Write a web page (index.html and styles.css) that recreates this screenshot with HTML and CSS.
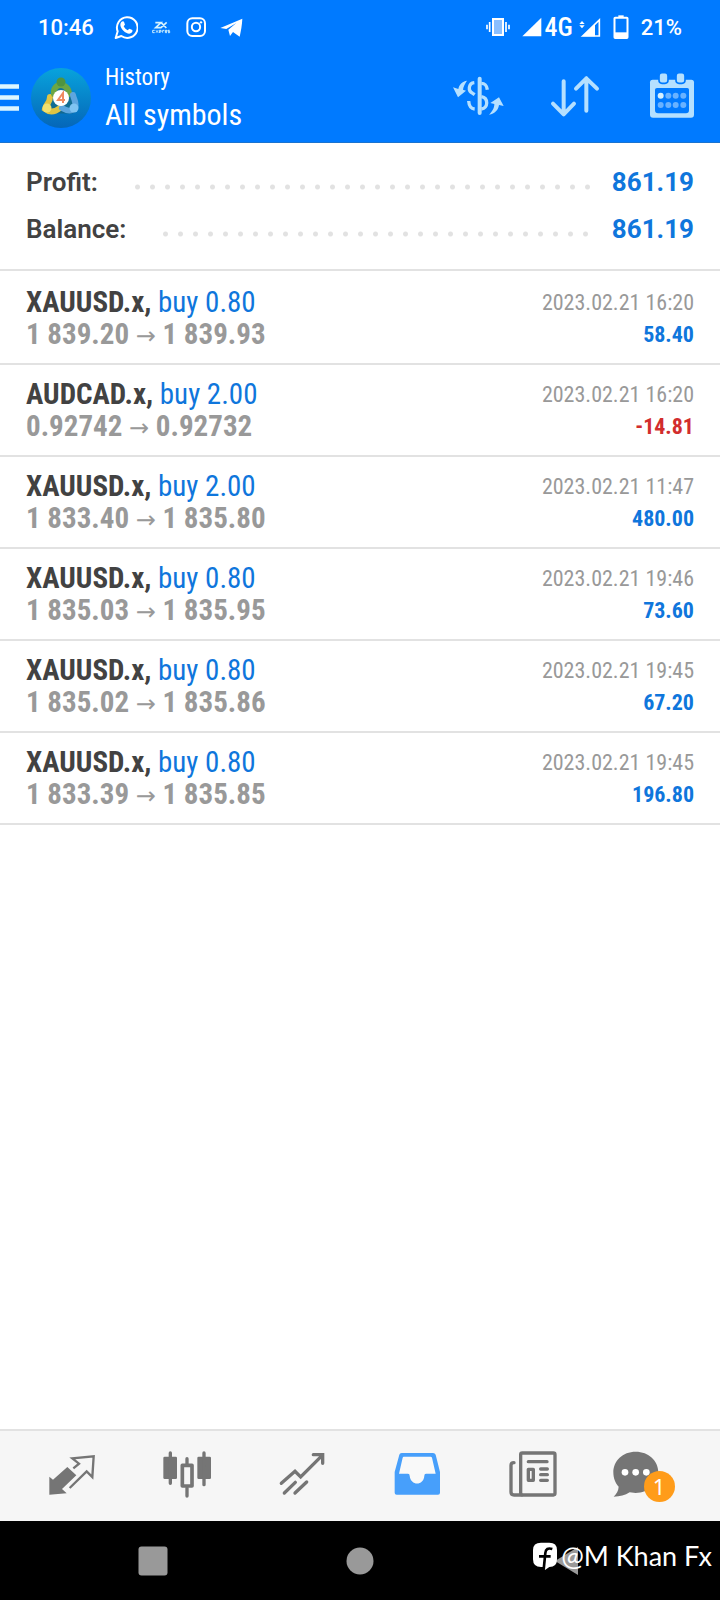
FILE: index.html
```html
<!DOCTYPE html>
<html lang="en">
<head>
<meta charset="utf-8">
<meta name="viewport" content="width=device-width, initial-scale=1">
<title>History</title>
<link rel="stylesheet" href="styles.css">
</head>
<body>
<header class="top">
  <div class="status">
    <time class="clock">10:46</time>
    <div class="notices">
      <svg viewBox="340 42 72 72"><path d="M345 111l6-20a31 31 0 1 1 11 14z" fill="none" stroke="#fff" stroke-width="6" stroke-linejoin="round"/><path d="M362 63c4-4 8-2 9 2l2 6-4 5c3 6 7 9 12 12l5-5 9 4c2 6-4 11-9 11-12 0-26-14-27-26 0-4 1-7 3-9z" fill="#fff"/></svg>
      <svg viewBox="446 42 72 72"><path d="M465 65h17l-16 15h16l17-16M482 64l16 17" fill="none" stroke="#d5f2ff" stroke-width="5"/><path d="M463 88h-6v7h6m4-7l6 7m0-7l-6 7m10 1v-8h5v5h-5m10 2v-7h5m3 3h5v-3h-5v7h5m8-7h-5v3h5v4h-5" fill="none" stroke="#cdf0ff" stroke-width="3"/></svg>
      <svg viewBox="550 44 72 72"><rect x="560" y="54" width="53" height="53" rx="15" fill="none" stroke="#fff" stroke-width="6"/><circle cx="586" cy="80" r="12.500" fill="none" stroke="#fff" stroke-width="6"/><circle cx="601" cy="66" r="3.500" fill="#fff"/></svg>
      <svg viewBox="654 44 72 72"><path d="M658 83l66-28c-1 20-4 36-8 54l-20-14-9 12-5-19 24-20-30 18z" fill="#fff"/></svg>
    </div>
    <div class="signals">
      <svg width="24" height="24" viewBox="138 43 72 72"><rect x="156" y="52" width="36" height="54" fill="#fff"/><rect x="162" y="58" width="24" height="42" fill="#8abfff"/><path d="M149 64v30M141 72v14M198 64v30M207 72v14" stroke="#fff" stroke-width="5"/></svg>
      <span class="network"><svg width="20" height="20" viewBox="248 50 60 60"><path d="M249 108l57-56v56z" fill="#fff"/></svg>4G</span>
      <span class="levels">
        <svg width="22" height="24" viewBox="420 43 66 72"><path d="M421 70l8-9 8 9zM421 74l8 9 8-9z" fill="#fff"/><path d="M431 106l50-48v48z" fill="none" stroke="#fff" stroke-width="5"/><path d="M430 107l38-37v37z" fill="#fff"/></svg>
        <svg width="16" height="26" viewBox="521 39 48 78"><path d="M537 49v-6h16v6" fill="#fff"/><rect x="525.500" y="50" width="39" height="61" rx="2" fill="none" stroke="#fff" stroke-width="6"/><path d="M525 94h40v16h-40z" fill="#fff"/></svg>
        <span>21%</span>
      </span>
    </div>
  </div>
  <div class="toolbar">
    <button class="menu" aria-label="Menu">
      <svg width="19" height="30" viewBox="0 0 19 30"><path d="M0 3.500h19M0 14.500h19M0 25.500h19" stroke="#ddf6ff" stroke-width="4.600"/></svg>
    </button>
    <svg class="logo" width="60" height="60" viewBox="0 0 60 60">
      <defs>
        <linearGradient id="sky" x1="0" y1="0" x2="0" y2="1"><stop offset="0" stop-color="#08a3dc"/><stop offset="1" stop-color="#0566b8"/></linearGradient>
      </defs>
      <circle cx="30" cy="30" r="30" fill="url(#sky)"/>
      <g stroke-linecap="round" fill="none">
        <path d="M20 39l10-18 10 18z" stroke="#1d5c60" stroke-width="13" stroke-linejoin="round" opacity=".5"/>
        <path d="M19 29c0 6-4 7-5 12 5 4 10 3 15-1" stroke="#e0c443" stroke-width="6"/>
        <path d="M23 26c-1-6 3-9 7-9s8 4 8 9" stroke="#6ba644" stroke-width="6"/>
        <path d="M42 27c1 5 4 8 2 13-4 4-8 3-13 0" stroke="#5ea6df" stroke-width="6"/>
      </g>
      <circle cx="30" cy="14" r="4.500" fill="#4f9440"/><circle cx="16" cy="40" r="4.500" fill="#f1e06f"/><circle cx="43" cy="40" r="4.500" fill="#7fc4f2"/>
      <circle cx="30" cy="30" r="8" fill="#fff"/>
      <path d="M32 35V25l-5 7h7" fill="none" stroke="#ef8a62" stroke-width="2"/>
    </svg>
    <div class="titles">
      <span class="sub">History</span>
      <h1 class="title">All symbols</h1>
    </div>
    <div class="actions">
      <button aria-label="Currency"><svg viewBox="21 208 180 180"><g fill="none" stroke="#b5e0ff" stroke-width="10"><path d="M116 240v103" stroke-width="12" stroke-linecap="round"/><path d="M100 252c-18 2-20 25-5 32l6 4M101 331c-12-1-17-10-18-24M121 254c12 0 16 6 18 19M121 294c22 4 21 34 0 37"/></g><path d="M78 246c-14 2-24 12-26 25l-16-5 15 30 24-20-9-3c1-9 6-18 12-27zM144 348c18-3 28-14 30-29l14 3-14-26-26 17 12 3c0 14-8 24-16 32z" fill="#b5e0ff"/></svg></button>
      <button aria-label="Sort"><svg viewBox="312 208 180 180"><path d="M368 248v98M336 315l32 32 31-32M436 336v-97M405 270l31-31 32 31" fill="none" stroke="#b5e0ff" stroke-width="12" stroke-linecap="round" stroke-linejoin="round"/></svg></button>
      <button aria-label="Choose period"><svg viewBox="603 208 180 180"><path d="M635 243h116q8 0 8 8v97q0 9-9 9H636q-9 0-9-9v-97q0-8 8-8z" fill="#b5e0ff"/><path d="M648 268h91q5 0 5 5v61q0 10-9 10h-84q-9 0-9-10v-61q0-5 6-5z" fill="#007aff"/><rect x="654" y="222" width="27" height="32" rx="9" fill="#b5e0ff" stroke="#007aff" stroke-width="5"/><rect x="705" y="222" width="27" height="32" rx="9" fill="#b5e0ff" stroke="#007aff" stroke-width="5"/><circle cx="659" cy="291" r="9" fill="#d5f0ff"/><g fill="#69b2ff"><circle cx="682" cy="291" r="9"/><circle cx="704" cy="291" r="9"/><circle cx="727" cy="291" r="9"/><circle cx="659" cy="319" r="9"/><circle cx="682" cy="319" r="9"/><circle cx="704" cy="319" r="9"/><circle cx="727" cy="319" r="9"/></g></svg></button>
    </div>
  </div>
</header>

<main class="content">
  <dl class="summary">
    <div class="total"><dt>Profit:</dt><dd>861.19</dd></div>
    <div class="total"><dt>Balance:</dt><dd>861.19</dd></div>
  </dl>
  <ul class="deals">
    <li class="deal"><div><p class="name"><b>XAUUSD.x,</b> <span class="side">buy 0.80</span></p><p class="price">1 839.20 <span class="arrow">→</span> 1 839.93</p></div><div class="right"><time class="date">2023.02.21 16:20</time><p class="result">58.40</p></div></li>
    <li class="deal"><div><p class="name"><b>AUDCAD.x,</b> <span class="side">buy 2.00</span></p><p class="price">0.92742 <span class="arrow">→</span> 0.92732</p></div><div class="right"><time class="date">2023.02.21 16:20</time><p class="result loss">-14.81</p></div></li>
    <li class="deal"><div><p class="name"><b>XAUUSD.x,</b> <span class="side">buy 2.00</span></p><p class="price">1 833.40 <span class="arrow">→</span> 1 835.80</p></div><div class="right"><time class="date">2023.02.21 11:47</time><p class="result">480.00</p></div></li>
    <li class="deal"><div><p class="name"><b>XAUUSD.x,</b> <span class="side">buy 0.80</span></p><p class="price">1 835.03 <span class="arrow">→</span> 1 835.95</p></div><div class="right"><time class="date">2023.02.21 19:46</time><p class="result">73.60</p></div></li>
    <li class="deal"><div><p class="name"><b>XAUUSD.x,</b> <span class="side">buy 0.80</span></p><p class="price">1 835.02 <span class="arrow">→</span> 1 835.86</p></div><div class="right"><time class="date">2023.02.21 19:45</time><p class="result">67.20</p></div></li>
    <li class="deal"><div><p class="name"><b>XAUUSD.x,</b> <span class="side">buy 0.80</span></p><p class="price">1 833.39 <span class="arrow">→</span> 1 835.85</p></div><div class="right"><time class="date">2023.02.21 19:45</time><p class="result">196.80</p></div></li>
  </ul>
</main>

<nav class="tabs">
  <button aria-label="Quotes"><svg viewBox="110 60 216 216"><path d="M150 170l11 9 43-38 27 25-43 41 14 13-52 4z" fill="#757575"/><path d="M222 145l17-14-20-16 64-6-4 62-17-17-51 50" fill="none" stroke="#757575" stroke-width="7"/></svg></button>
  <button aria-label="Charts"><svg viewBox="454 60 216 216"><g fill="#757575"><rect x="491" y="110" width="41" height="67" rx="4"/><rect x="593" y="110" width="41" height="67" rx="4"/></g><path d="M512 99v91M613 99v95M562 116v20M562 204v24" stroke="#757575" stroke-width="10" stroke-linecap="round"/><rect x="548" y="136" width="29" height="62" fill="#f6f6f6" stroke="#757575" stroke-width="11" stroke-linejoin="round"/></svg></button>
  <button aria-label="Trade"><svg viewBox="799 60 216 216"><path d="M845 190l41-36 17 17 64-64M941 104h28v26M854 219l33-32M886 219l35-33" fill="none" stroke="#757575" stroke-width="10" stroke-linecap="round"/></svg></button>
  <button aria-label="History" aria-current="page"><svg viewBox="64 60 216 216"><path d="M126 99h94q6 0 8 5l13 52v62q0 6-6 6H111q-6 0-6-6v-62l14-52q1-5 7-5z" fill="#479ffb"/><path d="M132 110h81q3 0 4 3l11 48h-29q-5 0-5 6c-2 31-41 31-44 0q0-6-5-6h-27l11-48q1-3 3-3z" fill="#f9f9f9"/></svg></button>
  <button aria-label="News"><svg viewBox="409 60 216 216"><g fill="none" stroke="#757575" stroke-width="10" stroke-linecap="round"><rect x="483" y="99" width="103" height="126" rx="5"/><path d="M463 128c-6 0-9 4-9 8v80q0 9 9 9h23M506 125h56M543 147h20M543 164h20M543 181h20"/><rect x="506" y="148" width="15" height="33" stroke-linejoin="round"/></g></svg></button>
  <button class="messages" aria-label="Messages"><svg viewBox="754 60 216 216"><path d="M828 95c39 0 68 27 68 62s-29 62-68 62l-18-2c-14 9-29 13-48 13 9-9 14-17 15-30-10-10-16-26-16-43 0-35 28-62 67-62z" fill="#757575"/><g fill="#fff"><circle cx="796" cy="157" r="10"/><circle cx="828" cy="157" r="10"/><circle cx="860" cy="157" r="10"/></g></svg><span class="badge">1</span></button>
</nav>

<footer class="system">
  <button aria-label="Recent apps"><svg viewBox="0 0 30 30"><rect x="0.500" y="0.500" width="29" height="29" rx="3" fill="#999"/></svg></button>
  <button aria-label="Home"><svg viewBox="0 0 30 30"><circle cx="15" cy="15" r="13.500" fill="#999"/></svg></button>
  <button aria-label="Back"><svg viewBox="0 0 30 30"><path d="M3 15L26 1v28z" fill="#999"/></svg></button>
  <p class="credit"><svg width="24" height="28" viewBox="515 370 72 84"><path d="M539 372h25q23 0 23 22v28q0 23-23 23l-13 9-3-9h-9q-24 0-24-23v-28q0-22 24-22z" fill="#fff"/><path d="M573 391c-13-4-20 0-21 12l-5 50M533 413h35" fill="none" stroke="#000" stroke-width="8"/></svg>@M Khan Fx</p>
</footer>
</body>
</html>
```
FILE: styles.css
```css
* { box-sizing: border-box; margin: 0; padding: 0; }
body {
  min-height: 100vh;
  display: flex;
  flex-direction: column;
  background: #fff;
  color: #424242;
  font-family: "Roboto Condensed", Roboto, sans-serif;
}
button { border: 0; background: none; font: inherit; color: inherit; display: flex; align-items: center; justify-content: center; }
svg { display: block; flex: none; }
ul { list-style: none; }

.top { background: #007aff; color: #fff; border-bottom: 1px solid #1a73d0; }
.status {
  display: flex;
  align-items: center;
  height: 54px;
  padding: 0 38px;
  font: 500 22px Roboto, sans-serif;
}
.notices { display: flex; gap: 11px; margin-left: 20px; }
.notices svg { width: 24px; height: 24px; }
.signals { display: flex; align-items: center; gap: 12px; margin-left: auto; }
.network { display: flex; align-items: center; gap: 2px; font: 500 26px "Roboto Condensed", Roboto, sans-serif; }
.levels { display: flex; align-items: center; gap: 12px; }
.network + .levels { margin-left: -6px; }

.toolbar { display: flex; align-items: center; height: 88px; }
.menu { width: 19px; }
.logo { margin-left: 12px; }
.titles { margin-left: 14px; }
.sub { display: block; font-size: 23px; line-height: 34px; }
.title { font-size: 30px; line-height: 40px; font-weight: 400; }
.actions { display: flex; margin-left: auto; }
.actions button { width: 97px; height: 80px; }
.actions svg { width: 60px; height: 60px; }

.content { flex: 1; }
.summary { padding: 16px 26px; border-bottom: 2px solid #e2e2e2; font: 600 26px/47px Roboto, sans-serif; }
.total { display: flex; align-items: center; }
.total::before {
  content: "";
  order: 1;
  flex: 1;
  height: 16px;
  margin: 8px 16px 0 32px;
  background: radial-gradient(circle at center, #e2e2e2 2px, transparent 3px) 0 0 / 15px 16px repeat-x;
}
.total dd { order: 2; font-weight: 700; color: #0f76dc; }

.deals { padding-top: 2px; }
.deal {
  display: flex;
  justify-content: space-between;
  padding: 13px 26px;
  border-bottom: 2px solid #e2e2e2;
  line-height: 32px;
}
.name { font-size: 29px; }
.side { color: #0f76dc; }
.price { color: #999; font-size: 29px; font-weight: 700; }
.arrow { font-family: "Noto Sans", "DejaVu Sans", sans-serif; font-size: 24px; font-weight: 400; line-height: 24px; }
.right { text-align: right; font-size: 22px; }
.date { display: block; color: #999; line-height: 34px; }
.result { color: #0f76dc; font-weight: 700; line-height: 30px; }
.loss { color: #d22d2d; }

.tabs { display: flex; padding: 9px 16px 9px 14px; background: #f6f6f6; border-top: 2px solid #e2e2e2; }
.tabs button { flex: 1; }
.tabs svg { width: 72px; height: 72px; }
.messages { position: relative; }
.badge {
  position: absolute;
  left: calc(50% + 12px);
  top: 31px;
  width: 31px;
  height: 31px;
  margin-left: -15px;
  border-radius: 50%;
  background: #ff9c1a;
  color: #fff;
  font: 400 22px/31px "Noto Sans", sans-serif;
}

.system { position: relative; display: flex; height: 79px; padding: 0 50px; background: #000; }
.system button { flex: 1; }
.system button svg { width: 30px; height: 30px; }
.credit {
  position: absolute;
  right: 8px;
  top: 16px;
  display: flex;
  align-items: center;
  gap: 4px;
  color: #fff;
  font: 400 27px/38px Lato, sans-serif;
}
```
